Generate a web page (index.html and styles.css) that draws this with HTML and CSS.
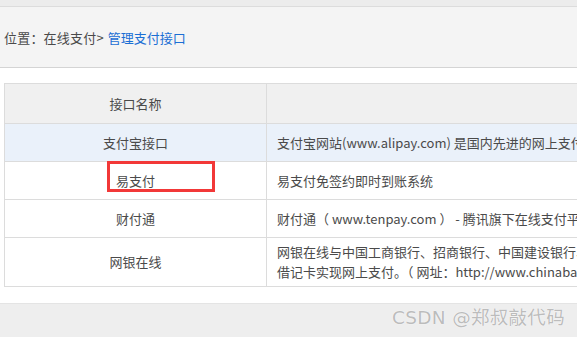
FILE: index.html
```html
<!DOCTYPE html>
<html lang="zh-CN">
<head>
<meta charset="utf-8">
<title>管理支付接口</title>
<link rel="stylesheet" href="styles.css">
</head>
<body>
<div class="page">
  <div class="topbar"></div>
  <div class="crumb">
    <span class="crumb-text">位置：在线支付&gt;</span>
    <a class="crumb-link" href="#">管理支付接口</a>
  </div>
  <div class="content">
    <table class="grid">
      <thead>
        <tr>
          <th class="col-name">接口名称</th>
          <th class="col-desc"></th>
        </tr>
      </thead>
      <tbody>
        <tr class="row-active">
          <td class="col-name">支付宝接口</td>
          <td class="col-desc"><span class="line">支付宝网站(www.alipay.com) 是国内先进的网上支付平台。</span></td>
        </tr>
        <tr>
          <td class="col-name">易支付</td>
          <td class="col-desc"><span class="line">易支付免签约即时到账系统</span></td>
        </tr>
        <tr>
          <td class="col-name">财付通</td>
          <td class="col-desc"><span class="line">财付通（ www.tenpay.com ） - 腾讯旗下在线支付平台</span></td>
        </tr>
        <tr>
          <td class="col-name">网银在线</td>
          <td class="col-desc"><span class="line">网银在线与中国工商银行、招商银行、中国建设银行、农业银行、民生银行等数十家金融机构达成协议。</span><span class="line">借记卡实现网上支付。（ 网址：http://www.chinabank.com.cn ）</span></td>
        </tr>
      </tbody>
    </table>
  </div>
  <div class="footer"></div>
  <div class="mark"></div>
  <div class="watermark">CSDN @郑叔敲代码</div>
</div>
</body>
</html>
```

FILE: styles.css
```css
html, body {
  margin: 0;
  padding: 0;
  background: #fff;
}

body {
  font-family: "Noto Sans CJK SC", "Noto Sans", sans-serif;
  font-size: 13px;
  color: #4a4a4a;
}

.page {
  position: relative;
  width: 577px;
  height: 337px;
  overflow: hidden;
  display: flex;
  flex-direction: column;
}

.topbar {
  height: 6px;
  background: #ececec;
  border-bottom: 1px solid #dcdcdc;
  flex: none;
}

.crumb {
  height: 60px;
  background: #f4f4f4;
  border-bottom: 1px solid #d4d4d4;
  padding: 0 4px;
  display: flex;
  align-items: center;
  flex: none;
  white-space: nowrap;
}

.crumb-text {
  color: #4a4a4a;
  letter-spacing: 0.2px;
}

.crumb-link {
  color: #1b6fd4;
  text-decoration: none;
  margin-left: 4px;
}

.content {
  padding: 15px 0 0 4px;
  height: 220px;
  flex: none;
}

.grid {
  border-collapse: collapse;
  width: 900px;
  table-layout: fixed;
}

.grid th,
.grid td {
  border: 1px solid #dcdcdc;
  padding: 4px 10px;
  line-height: 20px;
  height: 29px;
  font-weight: normal;
  color: #4a4a4a;
  vertical-align: middle;
}

.grid th {
  background: #f0f0f0;
  height: 31px;
}

.grid .col-name {
  width: 241px;
  text-align: center;
}

.grid .col-desc {
  text-align: left;
}

.line {
  display: block;
  white-space: nowrap;
}

.row-active td {
  background: #eaf1fa;
}

.footer {
  flex: 1;
  background: #eeeeee;
  border-top: 1px solid #e4e4e4;
}

/* highlight box around the 易支付 entry */
.mark {
  position: absolute;
  left: 107px;
  top: 161px;
  width: 102px;
  height: 25px;
  border: 3px solid #f23838;
}

.watermark {
  position: absolute;
  left: 392px;
  top: 303px;
  font-family: "DejaVu Sans", "Noto Sans CJK SC", sans-serif;
  font-size: 18.5px;
  color: #bcbcbc;
  text-shadow: 0 0 1px #fff, 0 0 1px #fff;
  white-space: nowrap;
  letter-spacing: 0.3px;
}
```
